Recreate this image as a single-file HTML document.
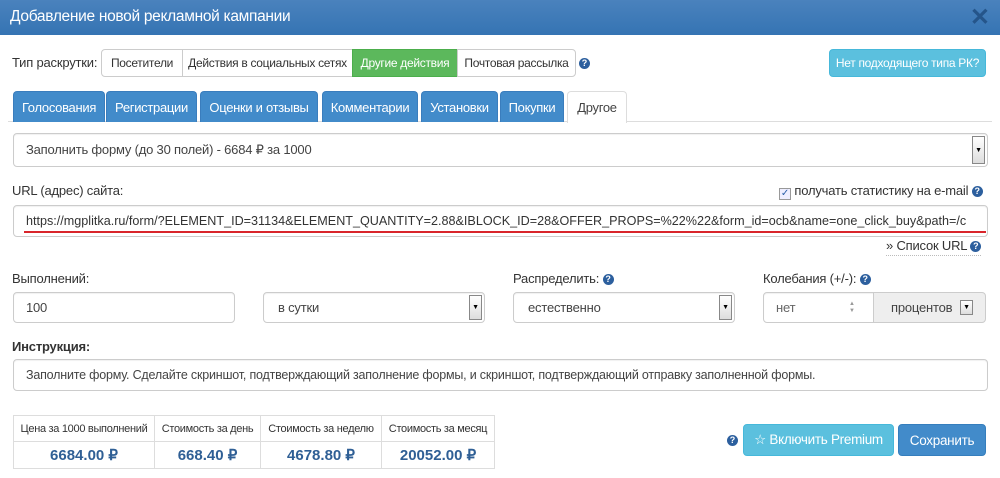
<!DOCTYPE html>
<html><head><meta charset="utf-8"><style>
*{box-sizing:border-box;margin:0;padding:0}
body{width:1000px;height:478px;background:#fff;font-family:"Liberation Sans",Arial,sans-serif;color:#333;position:relative;overflow:hidden;font-size:13px}
.a{position:absolute}
.hdr{left:0;top:0;width:1000px;height:35px;background:linear-gradient(#4a82bd,#3574b3);color:#fff;font-size:15.5px;padding:8px 10px;letter-spacing:-.3px}
.x{right:10px;top:3px;font-size:24px;color:#25558a;font-weight:bold}
.btn{position:absolute;border:1px solid #ccc;background:#fff;font-size:12px;letter-spacing:-.3px;display:flex;align-items:center;justify-content:center;color:#333}
.tab{position:absolute;top:91px;height:31px;background:#428bca;color:#fff;border:1px solid #3a7dbd;border-bottom:none;border-radius:4px 4px 0 0;font-size:13px;letter-spacing:-.3px;display:flex;align-items:center;justify-content:center}
.inp{position:absolute;border:1px solid #ccc;border-radius:4px;background:#fff;font-size:13px;display:flex;align-items:center;padding-left:12px;letter-spacing:-.2px;color:#444;box-shadow:inset 0 1px 1px rgba(0,0,0,.06)}
.q{display:inline-block;width:11px;height:11px;border-radius:50%;background:#2c5f9e;color:#fff;font-size:9px;font-weight:bold;text-align:center;line-height:11px;vertical-align:1px}
.dd{position:absolute;right:2px;top:2px;bottom:2px;width:13px;border:1px solid #888;background:linear-gradient(#fff,#ddd);font-size:7px;display:flex;align-items:center;justify-content:center;color:#000}
.lbl{position:absolute;font-size:13px;letter-spacing:-.2px}
td{border:1px solid #ddd;text-align:center}
</style></head><body>
<div class="a hdr">Добавление новой рекламной кампании</div>
<div class="a x">✕</div>

<div class="lbl" style="left:12px;top:55px">Тип раскрутки:</div>
<div class="btn" style="left:101px;top:49px;width:82px;height:28px;border-radius:4px 0 0 4px">Посетители</div>
<div class="btn" style="left:182px;top:49px;width:171px;height:28px">Действия в социальных сетях</div>
<div class="btn" style="left:352px;top:49px;width:106px;height:28px;background:#5cb85c;border-color:#4cae4c;color:#fff">Другие действия</div>
<div class="btn" style="left:457px;top:49px;width:119px;height:28px;border-radius:0 4px 4px 0">Почтовая рассылка</div>
<div class="a" style="left:579px;top:55px"><span class="q">?</span></div>
<div class="btn" style="left:829px;top:49px;width:157px;height:28px;background:#5bc0de;border-color:#46b8da;color:#fff;border-radius:4px">Нет подходящего типа РК?</div>

<div class="a" style="left:8px;top:121px;width:984px;height:1px;background:#ddd"></div>
<div class="tab" style="left:13px;width:92px">Голосования</div>
<div class="tab" style="left:106px;width:91px">Регистрации</div>
<div class="tab" style="left:200px;width:118px">Оценки и отзывы</div>
<div class="tab" style="left:322px;width:96px">Комментарии</div>
<div class="tab" style="left:421px;width:77px">Установки</div>
<div class="tab" style="left:500px;width:64px">Покупки</div>
<div class="tab" style="left:567px;width:60px;background:#fff;color:#444;border-color:#ddd;height:32px">Другое</div>

<div class="inp" style="left:13px;top:133px;width:975px;height:34px">Заполнить форму (до 30 полей) - 6684 ₽ за 1000<div class="dd">▼</div></div>
<div class="lbl" style="left:12px;top:183px">URL (адрес) сайта:</div>
<div class="lbl" style="left:779px;top:183px;font-size:13px"><span style="display:inline-block;width:12px;height:12px;border:1px solid #999;background:#eef;font-size:10px;line-height:10px;text-align:center;color:#2a5fa8;vertical-align:-1px">✓</span> получать статистику на e-mail <span class="q">?</span></div>
<div class="inp" style="left:13px;top:205px;width:975px;height:32px;overflow:hidden;white-space:nowrap;color:#333;letter-spacing:0;font-size:12.6px">https://mgplitka.ru/form/?ELEMENT_ID=31134&amp;ELEMENT_QUANTITY=2.88&amp;IBLOCK_ID=28&amp;OFFER_PROPS=%22%22&amp;form_id=ocb&amp;name=one_click_buy&amp;path=/c</div>
<div class="a" style="left:24px;top:231px;width:962px;height:2px;background:#d9252b"></div>
<div class="lbl" style="left:886px;top:238px;border-bottom:1px dotted #bbb;padding-bottom:2px">» Список URL <span class="q">?</span></div>

<div class="lbl" style="left:12px;top:271px">Выполнений:</div>
<div class="lbl" style="left:513px;top:271px">Распределить: <span class="q">?</span></div>
<div class="lbl" style="left:763px;top:271px">Колебания (+/-): <span class="q">?</span></div>
<div class="inp" style="left:13px;top:292px;width:222px;height:31px">100</div>
<div class="inp" style="left:263px;top:292px;width:222px;height:31px;padding-left:14px">в сутки<div class="dd">▼</div></div>
<div class="inp" style="left:513px;top:292px;width:222px;height:31px;padding-left:14px">естественно<div class="dd">▼</div></div>
<div class="inp" style="left:763px;top:292px;width:222px;height:31px;color:#666">нет<span class="a" style="left:85px;top:8px;font-size:6px;color:#999;line-height:7px">▲<br>▼</span>
<div class="a" style="left:109px;top:-1px;width:113px;height:31px;background:#eee;border:1px solid #ccc;border-radius:0 4px 4px 0;color:#444;padding-left:17px;line-height:29px">процентов<div class="dd" style="top:7px;bottom:7px;right:12px">▼</div></div></div>

<div class="lbl" style="left:12px;top:339px;font-weight:bold">Инструкция:</div>
<div class="inp" style="left:13px;top:359px;width:975px;height:32px;font-size:12.5px">Заполните форму. Сделайте скриншот, подтверждающий заполнение формы, и скриншот, подтверждающий отправку заполненной формы.</div>

<table class="a" style="left:13px;top:415px;width:482px;border-collapse:collapse;font-size:11px;letter-spacing:-.3px">
<tr style="height:26px"><td style="width:141px">Цена за 1000 выполнений</td><td style="width:106px">Стоимость за день</td><td style="width:121px">Стоимость за неделю</td><td>Стоимость за месяц</td></tr>
<tr style="height:27px;font-size:15px;font-weight:bold;color:#2f5f95;letter-spacing:0"><td>6684.00 ₽</td><td>668.40 ₽</td><td>4678.80 ₽</td><td>20052.00 ₽</td></tr>
</table>
<div class="a" style="left:727px;top:432px"><span class="q">?</span></div>
<div class="btn" style="left:743px;top:424px;width:151px;height:32px;background:#5bc0de;border-color:#46b8da;color:#fff;border-radius:4px;font-size:13.5px">☆ Включить Premium</div>
<div class="btn" style="left:898px;top:424px;width:88px;height:32px;background:#428bca;border-color:#357ebd;color:#fff;border-radius:4px;font-size:13.5px">Сохранить</div>
</body></html>
